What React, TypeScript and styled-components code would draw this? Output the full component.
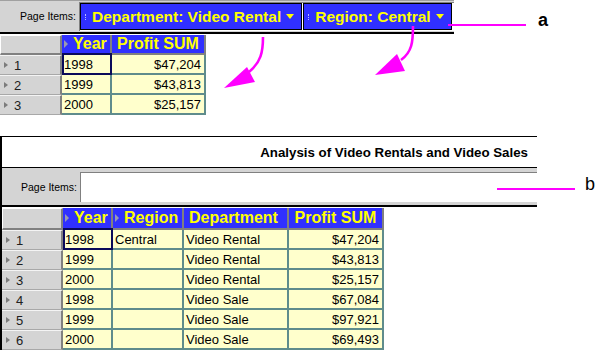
import styled, { createGlobalStyle } from 'styled-components';

const GlobalStyle = createGlobalStyle`
  html, body {
    margin: 0;
    padding: 0;
    background: #ffffff;
  }
  body {
    font-family: "Liberation Sans", Arial, sans-serif;
  }
`;

const Page = styled.div`
  position: relative;
  width: 601px;
  height: 350px;
  overflow: hidden;
  display: flex;
  flex-direction: column;
  align-items: flex-start;
`;

// page items bar
const ItemsBar = styled.div<{ $width: number; $height: number; $topLine?: boolean }>`
  display: flex;
  align-items: flex-start;
  width: ${p => p.$width}px;
  height: ${p => p.$height}px;
  background: #d4d4d4;
  border-top: ${p => (p.$topLine ? '1px solid #a0a0a0' : 'none')};
  border-bottom: 2px solid #000000;
`;

const ItemsLabel = styled.span<{ $width: number; $top: number; $height: number }>`
  width: ${p => p.$width}px;
  margin-top: ${p => p.$top}px;
  height: ${p => p.$height}px;
  line-height: ${p => p.$height}px;
  padding-right: 3px;
  box-sizing: border-box;
  text-align: right;
  font-size: 10.5px;
  color: #000000;
  white-space: nowrap;
`;

const ChipGroup = styled.div`
  flex: 1;
  display: flex;
  gap: 1px;
  margin-top: 1px;
  height: 28px;
  background: #ffffff;
  border-top: 1px solid #808080;
  border-left: 1px solid #808080;
`;

const Chip = styled.div`
  display: flex;
  align-items: center;
  height: 27px;
  box-sizing: border-box;
  padding: 0 7px 0 4px;
  background: #3030ff;
  border: 1px solid #000000;
  color: #ffff00;
  font-weight: bold;
  font-size: 15.5px;
  white-space: nowrap;
`;

const Grip = styled.span`
  width: 1px;
  height: 6px;
  margin-right: 5px;
  border-left: 1px dotted #b8b8ff;
`;

const Caret = styled.span`
  width: 0;
  height: 0;
  margin-left: 5px;
  border-left: 4.5px solid transparent;
  border-right: 4.5px solid transparent;
  border-top: 5px solid #ffff00;
`;

const InputBox = styled.div`
  flex: 1;
  margin-top: 4px;
  height: 30px;
  box-sizing: border-box;
  background: #ffffff;
  border-top: 1px solid #808080;
  border-left: 1px solid #808080;
`;

// grid tables
const Grid = styled.div<{ $cols: string; $head: number; $top: number }>`
  display: grid;
  grid-template-columns: ${p => p.$cols};
  grid-template-rows: ${p => p.$head}px;
  grid-auto-rows: 20px;
  margin-top: ${p => p.$top}px;
  font-size: 13px;
`;

const Corner = styled.div`
  box-sizing: border-box;
  background: #d4d4d4;
  border-top: 1px solid #ffffff;
  border-left: 1px solid #ffffff;
  border-right: 2px solid #808080;
  border-bottom: 2px solid #808080;
`;

const HeadCell = styled.div<{ $center?: boolean }>`
  display: flex;
  align-items: center;
  justify-content: ${p => (p.$center ? 'center' : 'flex-start')};
  box-sizing: border-box;
  padding-left: ${p => (p.$center ? 0 : 2)}px;
  background: #3030ff;
  border-right: 2px solid #808080;
  border-bottom: 2px solid #808080;
  color: #ffff00;
  font-weight: bold;
  font-size: 16px;
  white-space: nowrap;
  overflow: hidden;
`;

const SortMark = styled.span`
  width: 0;
  height: 0;
  margin-right: 5px;
  border-top: 4px solid transparent;
  border-bottom: 4px solid transparent;
  border-left: 4px solid #9a9ab0;
`;

const RowHead = styled.div`
  display: flex;
  align-items: center;
  box-sizing: border-box;
  padding-left: 4px;
  background: #d4d4d4;
  border-top: 1px solid #f4f4f4;
  border-bottom: 1px solid #a8a8a8;
  border-right: 2px solid #808080;
  color: #202020;
`;

const RowMark = styled.span`
  width: 0;
  height: 0;
  margin-right: 6px;
  border-top: 3.5px solid transparent;
  border-bottom: 3.5px solid transparent;
  border-left: 4px solid #7c7c7c;
`;

const DataCell = styled.div<{ $right?: boolean; $focus?: boolean }>`
  display: flex;
  align-items: center;
  justify-content: ${p => (p.$right ? 'flex-end' : 'flex-start')};
  box-sizing: border-box;
  padding: ${p => (p.$right ? '0 3px 0 0' : p.$focus ? '0 0 0 0' : '0 0 0 2px')};
  background: #ffffcc;
  border-right: 2px solid ${p => (p.$focus ? '#0a0a5a' : '#5f8c8c')};
  border-bottom: 2px solid ${p => (p.$focus ? '#0a0a5a' : '#5f8c8c')};
  border-top: ${p => (p.$focus ? '2px solid #0a0a5a' : 'none')};
  border-left: ${p => (p.$focus ? '2px solid #0a0a5a' : 'none')};
  margin-top: ${p => (p.$focus ? -2 : 0)}px;
  color: #000000;
  white-space: nowrap;
`;

// report frame
const Frame = styled.div`
  margin-top: 21px;
  width: 537px;
  height: 220px;
  box-sizing: border-box;
  border-top: 1px solid #000000;
  border-left: 2px solid #000000;
  display: flex;
  flex-direction: column;
`;

const TitleBar = styled.div`
  height: 30px;
  display: flex;
  align-items: center;
  justify-content: flex-end;
  padding-right: 9px;
  border-bottom: 1px solid #000000;
  font-weight: bold;
  font-size: 13.3px;
  color: #000000;
`;

// annotations over the figure
const Overlay = styled.svg`
  position: absolute;
  left: 0;
  top: 0;
  pointer-events: none;
`;

const Tag = styled.span<{ $x: number; $y: number; $bold?: boolean }>`
  position: absolute;
  left: ${p => p.$x}px;
  top: ${p => p.$y}px;
  font-size: 18px;
  line-height: 18px;
  font-weight: ${p => (p.$bold ? 'bold' : 'normal')};
  color: #000000;
`;

const rowsA = [
  ['1', '1998', '$47,204'],
  ['2', '1999', '$43,813'],
  ['3', '2000', '$25,157'],
];

const rowsB = [
  ['1', '1998', 'Central', 'Video Rental', '$47,204'],
  ['2', '1999', '', 'Video Rental', '$43,813'],
  ['3', '2000', '', 'Video Rental', '$25,157'],
  ['4', '1998', '', 'Video Sale', '$67,084'],
  ['5', '1999', '', 'Video Sale', '$97,921'],
  ['6', '2000', '', 'Video Sale', '$69,493'],
];

const MAGENTA = '#ff00ff';

export default function App() {
  return (
    <Page>
      <GlobalStyle />

      {/* 상단 피벗 */}
      <ItemsBar $width={454} $height={35} $topLine>
        <ItemsLabel $width={79} $top={1} $height={29}>
          Page Items:
        </ItemsLabel>
        <ChipGroup>
          <Chip>
            <Grip />
            Department: Video Rental
            <Caret />
          </Chip>
          <Chip>
            <Grip />
            Region: Central
            <Caret />
          </Chip>
        </ChipGroup>
      </ItemsBar>

      <Grid $cols="62px 50px 94px" $head={20} $top={1}>
        <Corner />
        <HeadCell>
          <SortMark />
          Year
        </HeadCell>
        <HeadCell $center>Profit SUM</HeadCell>
        {rowsA.map((r, i) => [
          <RowHead key={`h${i}`}>
            <RowMark />
            {r[0]}
          </RowHead>,
          <DataCell key={`y${i}`} $focus={i === 0}>
            {r[1]}
          </DataCell>,
          <DataCell key={`p${i}`} $right>
            {r[2]}
          </DataCell>,
        ])}
      </Grid>

      {/* 하단 리포트 */}
      <Frame>
        <TitleBar>Analysis of Video Rentals and Video Sales</TitleBar>
        <ItemsBar $width={535} $height={37}>
          <ItemsLabel $width={78} $top={4} $height={30}>
            Page Items:
          </ItemsLabel>
          <InputBox />
        </ItemsBar>
        <Grid $cols="61px 50px 71px 105px 95px" $head={22} $top={1}>
          <Corner />
          <HeadCell>
            <SortMark />
            Year
          </HeadCell>
          <HeadCell>
            <SortMark />
            Region
          </HeadCell>
          <HeadCell style={{ paddingLeft: 5 }}>Department</HeadCell>
          <HeadCell $center>Profit SUM</HeadCell>
          {rowsB.map((r, i) => [
            <RowHead key={`h${i}`}>
              <RowMark />
              {r[0]}
            </RowHead>,
            <DataCell key={`y${i}`} $focus={i === 0}>
              {r[1]}
            </DataCell>,
            <DataCell key={`r${i}`}>{r[2]}</DataCell>,
            <DataCell key={`d${i}`}>{r[3]}</DataCell>,
            <DataCell key={`p${i}`} $right>
              {r[4]}
            </DataCell>,
          ])}
        </Grid>
      </Frame>

      <Overlay width={601} height={350} viewBox="0 0 601 350">
        <line x1={448} y1={25} x2={526} y2={25} stroke={MAGENTA} strokeWidth={2} />
        <line x1={497} y1={189} x2={575} y2={189} stroke={MAGENTA} strokeWidth={2} />
        <path d="M263 37 C263 52 261 62 249 72" fill="none" stroke={MAGENTA} strokeWidth={2.6} />
        <polygon points="224,88 247,67 255,82" fill={MAGENTA} />
        <path d="M413 26 C413 42 412 52 401 60" fill="none" stroke={MAGENTA} strokeWidth={2.6} />
        <polygon points="375,75 397,54 405,71" fill={MAGENTA} />
      </Overlay>
      <Tag $x={538} $y={11} $bold>
        a
      </Tag>
      <Tag $x={585} $y={175}>
        b
      </Tag>
    </Page>
  );
}
